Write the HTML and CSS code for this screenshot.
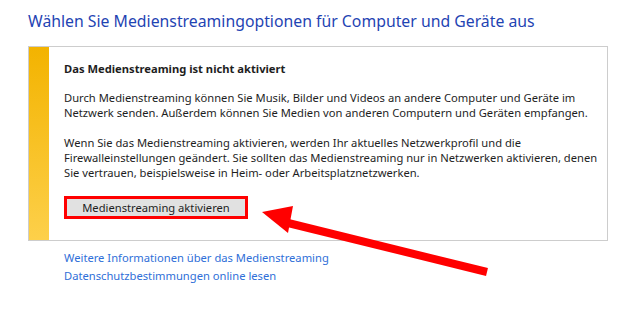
FILE: index.html
```html
<!DOCTYPE html>
<html lang="de">
<head>
    <meta charset="UTF-8">
    <title>Medienstreamingoptionen</title>
    <link rel="stylesheet" href="styles.css">
</head>
<body>
    <h1 class="title">Wählen Sie Medienstreamingoptionen für Computer und Geräte aus</h1>

    <div class="panel">
        <div class="stripe"></div>
        <div class="content">
            <h2 class="heading">Das Medienstreaming ist nicht aktiviert</h2>
            <p>Durch Medienstreaming können Sie Musik, Bilder und Videos an andere Computer und Geräte im Netzwerk senden. Außerdem können Sie Medien von anderen Computern und Geräten empfangen.</p>
            <p>Wenn Sie das Medienstreaming aktivieren, werden Ihr aktuelles Netzwerkprofil und die Firewalleinstellungen geändert. Sie sollten das Medienstreaming nur in Netzwerken aktivieren, denen Sie vertrauen, beispielsweise in Heim- oder Arbeitsplatznetzwerken.</p>
            <div class="highlight">
                <button type="button" class="btn">Medienstreaming aktivieren</button>
            </div>
        </div>
    </div>

    <div class="links">
        <a href="#">Weitere Informationen über das Medienstreaming</a>
        <a href="#">Datenschutzbestimmungen online lesen</a>
    </div>

    <!-- annotation arrow -->
    <svg class="arrow" width="637" height="317" viewBox="0 0 637 317">
        <line x1="284" y1="222" x2="487" y2="272" stroke="#ff0000" stroke-width="8"/>
        <polygon points="262,212 293,206 288,233" fill="#ff0000"/>
    </svg>
</body>
</html>
```

FILE: styles.css
```css
body {
    margin: 0;
    font-family: "Noto Sans", "Open Sans", sans-serif;
    font-size: 11.2px;
    color: #1e1e1e;
    background: #fff;
    position: relative;
    height: 317px;
    overflow: hidden;
}

.title {
    margin: 0;
    padding: 10px 0 0 28px;
    height: 46px;
    box-sizing: border-box;
    font-size: 15.8px;
    font-weight: normal;
    color: #1f44b3;
}

/* Info panel */
.panel {
    display: flex;
    margin-left: 28px;
    width: 580px;
    height: 195px;
    box-sizing: border-box;
    border: 1px solid #cdcdcd;
}

.stripe {
    flex: none;
    width: 20px;
    background: linear-gradient(#f3b300, #fdd04a);
}

.content {
    flex: 1;
    padding: 14px 8px 0 15px;
}

.heading {
    margin: 0 0 14px;
    font-size: 11.2px;
    font-weight: bold;
    line-height: 15px;
}

.content p {
    margin: 0 0 15px;
    line-height: 15px;
}

.highlight {
    display: inline-block;
    border: 3px solid #ff0000;
    margin-top: 1px;
}

.btn {
    display: block;
    width: 178px;
    height: 17px;
    padding: 0;
    border: none;
    background: #e1e1e1;
    font-family: inherit;
    font-size: 11.2px;
    color: #1e1e1e;
}

/* Links below */
.links {
    display: flex;
    flex-direction: column;
    padding: 8px 0 0 64px;
    line-height: 18px;
}

.links a {
    color: #2f6fd8;
    text-decoration: none;
    font-size: 11.2px;
}

.arrow {
    position: absolute;
    top: 0;
    left: 0;
}
```
